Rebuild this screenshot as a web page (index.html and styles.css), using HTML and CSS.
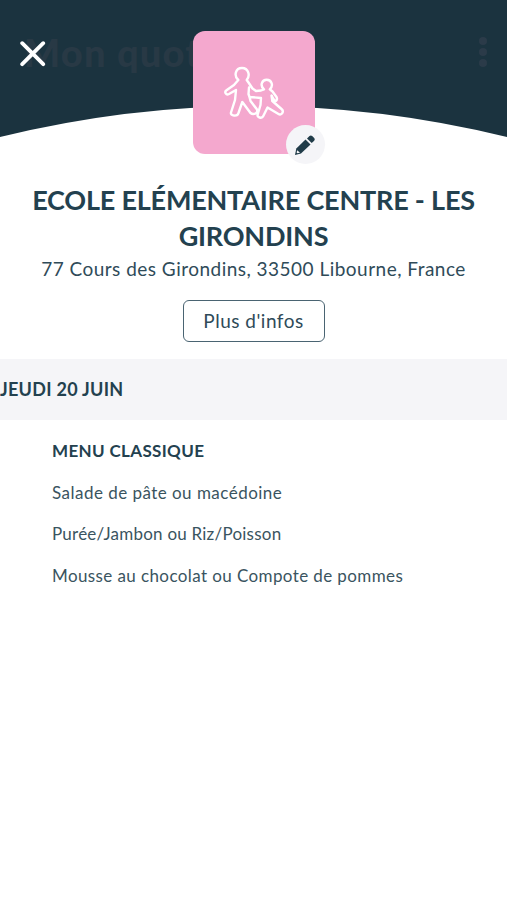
FILE: index.html
```html
<!DOCTYPE html>
<html lang="fr">
<head>
  <meta charset="UTF-8" />
  <meta name="viewport" content="width=device-width, initial-scale=1.0" />
  <title>Menu de la cantine</title>
  <link rel="stylesheet" href="styles.css">
</head>
<body>
  <header class="header">
    <div class="topbar">
      <div class="behind-title">Mon quot</div>
      <svg class="dots" width="8" height="32" viewBox="0 0 8 32"><circle cx="4" cy="5" r="4"/><circle cx="4" cy="16" r="4"/><circle cx="4" cy="27" r="4"/></svg>
      <svg class="close" width="26" height="26" viewBox="0 0 26 26"><path d="M2.2 2.2 23.2 23.2M23.2 2.2 2.2 23.2"/></svg>
    </div>
    <svg class="curve" viewBox="0 0 507 31" preserveAspectRatio="none"><path d="M0 31Q253.500 -31 507 31Z"/></svg>
  </header>

  <section class="place">
    <div class="tile">
      <svg class="kids" width="62" height="56" viewBox="0 0 62 56">
        <path d="M15.300 15C10.500 10.500 12.500 3 19 3S27.500 10.500 23.700 15L25.500 17.500L29.500 23.500L33 26L38 25.500L41 24.300C36.500 20.500 39 14.800 43.700 14.800S51 20.500 46.800 24.300L49.500 26.500L53.500 32C55 35.500 52.500 37 50.800 34.500L48.500 30.500L49.300 36L58.500 44C61.500 46.500 58.500 51 55.500 49L44.500 42.500L40.300 51C39 54 33.500 52.500 34.700 49.500L37.500 40L38 33L26.500 32L27.500 36L34 44.500C35.500 48 30.500 50.500 27.500 48L19.300 37L15.500 48C14.500 52 7 51 8 47.500L12 35L13 25L6 29C3 30.500 1 27 3.500 25.200L11 20ZM26 22.500L25.500 29L26.500 32"/>
      </svg>
      <div class="edit">
        <svg width="22" height="22" viewBox="0 0 22 22">
          <path d="M1 21 2.300 14.500 11.500 5.500 16.500 10.500 7 19.500Z"/>
          <path d="M13 4.500 15.500 2Q16.800 .8 18.200 2.100L20.200 4.100Q21.400 5.400 20.200 6.700L17.700 9Z"/>
          <path class="tip" d="M3.200 16.200 6 18.700 3.400 19.300 2.600 18.500Z"/>
        </svg>
      </div>
    </div>
    <h1>ECOLE ELÉMENTAIRE CENTRE - LES<br>GIRONDINS</h1>
    <p class="address">77 Cours des Girondins, 33500 Libourne, France</p>
    <button class="more">Plus d'infos</button>
  </section>

  <h2 class="day">JEUDI 20 JUIN</h2>

  <section class="menu">
    <h3>MENU CLASSIQUE</h3>
    <p class="dish-one">Salade de pâte ou macédoine</p>
    <p class="dish-two">Purée/Jambon ou Riz/Poisson</p>
    <p class="dish-three">Mousse au chocolat ou Compote de pommes</p>
  </section>
</body>
</html>
```
FILE: styles.css
```css
body {
  margin: 0;
  background: #fff;
  color: #23414f;
  font-family: Lato, 'Liberation Sans', sans-serif;
}
.header {
  display: flex;
  flex-direction: column;
  justify-content: space-between;
  height: 137px;
  background: #1b333f;
}
.topbar {
  position: relative;
  display: flex;
  justify-content: space-between;
  padding: 36px 20px 0 24px;
}
.behind-title {
  margin-top: -2px;
  font-size: 38px;
  line-height: 36px;
  font-weight: 900;
  letter-spacing: 1.2px;
  color: #283945;
}
.dots {
  fill: #2b3b49;
}
.close {
  position: absolute;
  left: 20px;
  top: 41px;
  fill: none;
  stroke: #fff;
  stroke-width: 3.8;
  stroke-linecap: round;
}
.curve {
  display: block;
  width: 100%;
  height: 31px;
  fill: #fff;
}
.place {
  display: flex;
  flex-direction: column;
  align-items: center;
  margin-top: -106px;
  padding-bottom: 17px;
}
.tile {
  position: relative;
  display: flex;
  align-items: center;
  justify-content: center;
  width: 122px;
  height: 123px;
  border-radius: 12px;
  background: #f4a8ce;
}
.kids {
  fill: none;
  stroke: #fff;
  stroke-width: 2.4;
  stroke-linejoin: round;
  stroke-linecap: round;
}
.edit {
  position: absolute;
  right: -10px;
  bottom: -10px;
  display: flex;
  align-items: center;
  justify-content: center;
  width: 39px;
  height: 39px;
  border-radius: 50%;
  background: #f5f5f8;
  fill: #213c49;
}
.tip {
  fill: #f5f5f8;
}
h1 {
  margin: 28px 0 0;
  font-size: 27px;
  line-height: 36px;
  font-weight: 700;
  letter-spacing: -0.2px;
  text-align: center;
  white-space: nowrap;
}
.address {
  margin: 2px 0 0;
  font-size: 19px;
  line-height: 26px;
  letter-spacing: 0.48px;
  color: #2f4b59;
  white-space: nowrap;
}
.more {
  width: 142px;
  height: 42px;
  margin-top: 18px;
  padding: 0 0 2px;
  border: 1.5px solid #4a6472;
  border-radius: 6px;
  background: #fff;
  color: #2f4b59;
  font-family: inherit;
  font-size: 19px;
  letter-spacing: 0.5px;
}
.day {
  margin: 0;
  padding-bottom: 1px;
  background: #f5f5f8;
  font-size: 18px;
  line-height: 60px;
  font-weight: 700;
  letter-spacing: 0.27px;
}
.menu {
  display: grid;
  grid-auto-rows: 41.6px;
  align-items: center;
  justify-items: start;
  padding: 10px 52px;
  white-space: nowrap;
}
.menu h3 {
  margin: 0;
  font-size: 17px;
  font-weight: 700;
  letter-spacing: 0.35px;
}
.menu p {
  margin: 0;
  font-size: 17px;
  color: #3a5460;
}
.menu .dish-one {
  letter-spacing: 0.47px;
}
.menu .dish-two {
  letter-spacing: 0.23px;
}
.menu .dish-three {
  letter-spacing: 0.4px;
}
```
